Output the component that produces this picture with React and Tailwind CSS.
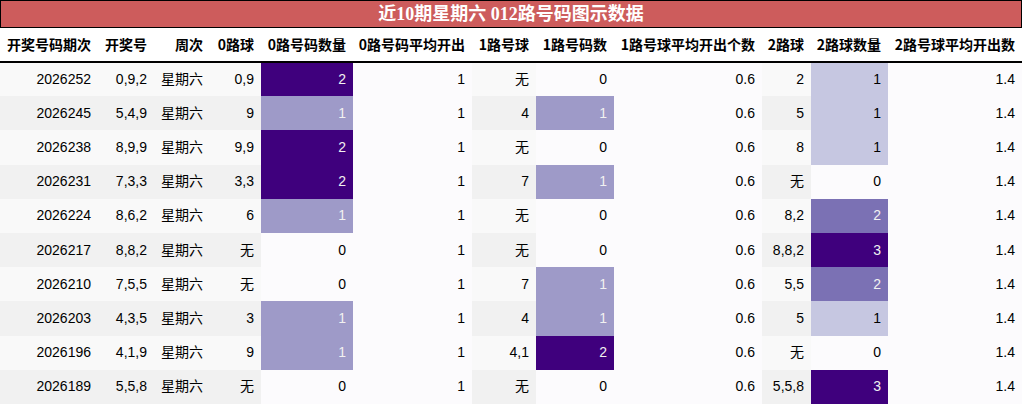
import React from "react";

const columns = [
    { title: "开奖号码期次", w: "w-[98px]" },
    { title: "开奖号", w: "w-[56px]" },
    { title: "周次", w: "w-[56px]" },
    { title: "0路球", w: "w-[51px]" },
    { title: "0路号码数量", w: "w-[92px]" },
    { title: "0路号码平均开出", w: "w-[119px]" },
    { title: "1路号球", w: "w-[64px]" },
    { title: "1路号码数", w: "w-[78px]" },
    { title: "1路号球平均开出个数", w: "w-[148px]" },
    { title: "2路球", w: "w-[49px]" },
    { title: "2路球数量", w: "w-[77px]" },
    { title: "2路号球平均开出数", w: "w-[134px]" },
];

// [期次, 开奖号, 0路球, 0数量, 1路球, 1数量, 2路球, 2数量]
const rows = [
    ["2026252", "0,9,2", "0,9", 2, "无", 0, "2", 1],
    ["2026245", "5,4,9", "9", 1, "4", 1, "5", 1],
    ["2026238", "8,9,9", "9,9", 2, "无", 0, "8", 1],
    ["2026231", "7,3,3", "3,3", 2, "7", 1, "无", 0],
    ["2026224", "8,6,2", "6", 1, "无", 0, "8,2", 2],
    ["2026217", "8,8,2", "无", 0, "无", 0, "8,8,2", 3],
    ["2026210", "7,5,5", "无", 0, "7", 1, "5,5", 2],
    ["2026203", "4,3,5", "3", 1, "4", 1, "5", 1],
    ["2026196", "4,1,9", "9", 1, "4,1", 2, "无", 0],
    ["2026189", "5,5,8", "无", 0, "无", 0, "5,5,8", 3],
];

// Purples gradient, max value of column -> darkest
const zeroOne = {
    0: "bg-[#fcfbfd] text-black",
    1: "bg-[#9e9ac8] text-[#f1f1f1]",
    2: "bg-[#3f007d] text-[#f1f1f1]",
};
const twoCol = {
    0: "bg-[#fcfbfd] text-black",
    1: "bg-[#c6c7e1] text-black",
    2: "bg-[#7b71b4] text-[#f1f1f1]",
    3: "bg-[#3f007d] text-[#f1f1f1]",
};

const mean = "bg-[#fcfbfd] text-black";

export default function App() {
    return (
        <div className="w-[1024px] h-[404px] bg-white font-['Liberation_Sans','Noto_Sans_CJK_SC',sans-serif] text-[14px] text-black">
            <div className="w-[1022px] h-[28px] bg-[#cd5c5c] border border-black flex items-center justify-center">
                <span className="text-white font-bold text-[18px] font-['Liberation_Serif','Noto_Sans_CJK_SC',serif] leading-none">近10期星期六 012路号码图示数据</span>
            </div>
            <table className="table-fixed w-[1022px] border-collapse">
                <colgroup>
                    {columns.map((c) => <col key={c.title} className={c.w} />)}
                </colgroup>
                <thead>
                    <tr className="h-[34px] border-b-2 border-black">
                        {columns.map((c) => (
                            <th key={c.title} className="text-right pr-[7px] font-bold whitespace-nowrap font-['Noto_Sans_CJK_SC',sans-serif] text-[14px]">{c.title}</th>
                        ))}
                    </tr>
                </thead>
                <tbody>
                    {rows.map((r, i) => {
                        const rowBg = i % 2 === 0 ? "bg-[#f9f9f9]" : "bg-[#f1f1f1]";
                        return (
                            <tr key={r[0]} className={`h-[34.2px] ${rowBg}`}>
                                <td className="text-right pr-[7px]">{r[0]}</td>
                                <td className="text-right pr-[7px]">{r[1]}</td>
                                <td className="text-right pr-[7px]">星期六</td>
                                <td className="text-right pr-[7px]">{r[2]}</td>
                                <td className={`text-right pr-[7px] ${zeroOne[r[3]]}`}>{r[3]}</td>
                                <td className={`text-right pr-[7px] ${mean}`}>1</td>
                                <td className="text-right pr-[7px]">{r[4]}</td>
                                <td className={`text-right pr-[7px] ${zeroOne[r[5]]}`}>{r[5]}</td>
                                <td className={`text-right pr-[7px] ${mean}`}>0.6</td>
                                <td className="text-right pr-[7px]">{r[6]}</td>
                                <td className={`text-right pr-[7px] ${twoCol[r[7]]}`}>{r[7]}</td>
                                <td className={`text-right pr-[7px] ${mean}`}>1.4</td>
                            </tr>
                        );
                    })}
                </tbody>
            </table>
        </div>
    );
}
